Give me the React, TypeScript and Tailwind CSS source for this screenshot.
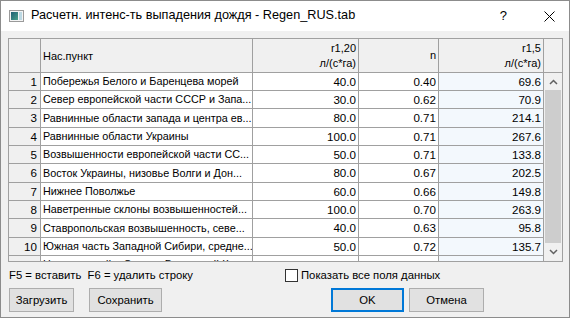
const rows = [
  { name: "Побережья Белого и Баренцева морей", r20: "40.0", n: "0.40", r5: "69.6" },
  { name: "Север европейской части СССР и Запа...", r20: "30.0", n: "0.62", r5: "70.9" },
  { name: "Равнинные области запада и центра ев...", r20: "80.0", n: "0.71", r5: "214.1" },
  { name: "Равнинные области Украины", r20: "100.0", n: "0.71", r5: "267.6" },
  { name: "Возвышенности европейской части СС...", r20: "50.0", n: "0.71", r5: "133.8" },
  { name: "Восток Украины, низовье Волги и Дон...", r20: "80.0", n: "0.67", r5: "202.5" },
  { name: "Нижнее Поволжье", r20: "60.0", n: "0.66", r5: "149.8" },
  { name: "Наветренные склоны возвышенностей...", r20: "100.0", n: "0.70", r5: "263.9" },
  { name: "Ставропольская возвышенность, севе...", r20: "40.0", n: "0.63", r5: "95.8" },
  { name: "Южная часть Западной Сибири, средне...", r20: "50.0", n: "0.72", r5: "135.7" },
  { name: "Центральный и Северо-Восточный Каз...", r20: "50.0", n: "0.74", r5: "139.5" },
];

const ui = "font-['Liberation_Sans',Arial,sans-serif]";

function Chevron({ up }: { up?: boolean }) {
  return (
    <svg width="9" height="6" viewBox="0 0 9 6" fill="none" stroke="#606060" strokeWidth="1.5">
      {up ? <path d="M1 5l3.5-3.5L8 5" /> : <path d="M1 1l3.5 3.5L8 1" />}
    </svg>
  );
}

function Button({ label, focused, w }: { label: string; focused?: boolean; w: string }) {
  return (
    <div
      className={`${w} h-[24px] flex items-center justify-center bg-[#e1e1e1] text-[11.3px] text-black ${
        focused ? "border-2 border-[#0078d7]" : "border border-[#adadad]"
      }`}
    >
      {label}
    </div>
  );
}

export default function App() {
  return (
    <div className={`w-[570px] h-[318px] bg-[#f0f0f0] border border-[#8c8c8c] flex flex-col overflow-hidden ${ui}`}>
      {/* title bar */}
      <div className="h-[30px] bg-white flex items-center shrink-0">
        <svg className="ml-[8px]" width="15" height="12" viewBox="0 0 15 12">
          <rect x="0.5" y="0.5" width="14" height="11" fill="#f4f4f4" stroke="#9a9a9a" />
          <defs>
            <linearGradient id="g" x1="0" y1="0" x2="1" y2="1">
              <stop offset="0" stopColor="#1f5f74" />
              <stop offset="1" stopColor="#4aa08a" />
            </linearGradient>
          </defs>
          <rect x="2" y="2" width="7" height="8" fill="url(#g)" />
          <rect x="10" y="2" width="3" height="8" fill="#bcd9e4" />
        </svg>
        <span className="ml-[7px] text-[12.7px] text-black">Расчетн. интенс-ть выпадения дождя - Regen_RUS.tab</span>
        <span className="ml-auto text-[13px] text-black mr-[37px]">?</span>
        <svg className="mr-[14px]" width="11" height="11" viewBox="0 0 11 11" stroke="#000" strokeWidth="1">
          <path d="M0.5 0.5l10 10M10.5 0.5l-10 10" />
        </svg>
      </div>

      <div className="px-[7px] pt-[7px] flex flex-col">
        {/* grid */}
        <div className="w-[555px] h-[224px] border border-[#a0a0a0] flex flex-col overflow-hidden bg-white text-[11px] text-black">
          <div className="h-[34px] shrink-0 flex bg-[#f0f0f0] border-b border-[#a0a0a0]">
            <div className="w-[32px] border-r border-[#a0a0a0]" />
            <div className="w-[212px] border-r border-[#a0a0a0] flex items-center pl-[2px] pt-[1px]">Нас.пункт</div>
            <div className="w-[106px] border-r border-[#a0a0a0] flex flex-col items-end justify-center pr-[2px] leading-[15px]">
              <span>r1,20</span>
              <span>л/(с*га)</span>
            </div>
            <div className="w-[80px] border-r border-[#a0a0a0] flex items-center justify-end pr-[2px]">n</div>
            <div className="w-[105px] border-r border-[#a0a0a0] flex flex-col items-end justify-center pr-[2px] leading-[15px]">
              <span>r1,5</span>
              <span>л/(с*га)</span>
            </div>
            <div className="flex-1" />
          </div>
          <div className="flex-1 flex min-h-0">
            <div className="w-[535px] overflow-hidden text-[11.6px]">
              {rows.map((r, i) => (
                <div
                  key={i}
                  className={`flex border-b border-[#a0a0a0] ${i % 3 === 2 ? "h-[19px]" : "h-[18px]"}`}
                >
                  <div className="w-[32px] shrink-0 bg-[#f0f0f0] border-r border-[#a0a0a0] flex items-center justify-end pr-[3px]">
                    {i + 1}
                  </div>
                  <div className="w-[212px] shrink-0 border-r border-[#a0a0a0] flex items-center pl-[2px] whitespace-nowrap overflow-hidden text-[10.8px]">
                    {r.name}
                  </div>
                  <div className="w-[106px] shrink-0 border-r border-[#a0a0a0] flex items-center justify-end pr-[2px]">
                    {r.r20}
                  </div>
                  <div className="w-[80px] shrink-0 border-r border-[#a0a0a0] flex items-center justify-end pr-[2px]">
                    {r.n}
                  </div>
                  <div className="w-[105px] shrink-0 bg-[#f3f8fd] border-r border-[#a0a0a0] flex items-center justify-end pr-[2px]">
                    {r.r5}
                  </div>
                </div>
              ))}
            </div>
            {/* scrollbar */}
            <div className="w-[18px] bg-[#f0f0f0] flex flex-col">
              <div className="h-[17px] flex items-center justify-center">
                <Chevron up />
              </div>
              <div className="h-[153px] mx-[1px] bg-[#cdcdcd]" />
              <div className="flex-1 flex items-center justify-center">
                <Chevron />
              </div>
            </div>
          </div>
        </div>

        <div className="mt-[6px] h-[14px] flex items-center text-[11.3px] text-black">
          <span className="ml-[1px] w-[185px] whitespace-pre">F5 = вставить  F6 = удалить строку</span>
          <div className="ml-[91px] w-[13px] h-[13px] border border-[#333] bg-white" />
          <span className="ml-[3px]">Показать все поля данных</span>
        </div>

        <div className="mt-[6px] flex items-center">
          <div className="ml-[1px]">
            <Button label="Загрузить" w="w-[65px]" />
          </div>
          <div className="ml-[15px]">
            <Button label="Сохранить" w="w-[73px]" />
          </div>
          <div className="ml-auto mr-[78px] flex gap-[5px]">
            <Button label="OK" focused w="w-[73px]" />
            <Button label="Отмена" w="w-[75px]" />
          </div>
        </div>
      </div>
    </div>
  );
}
